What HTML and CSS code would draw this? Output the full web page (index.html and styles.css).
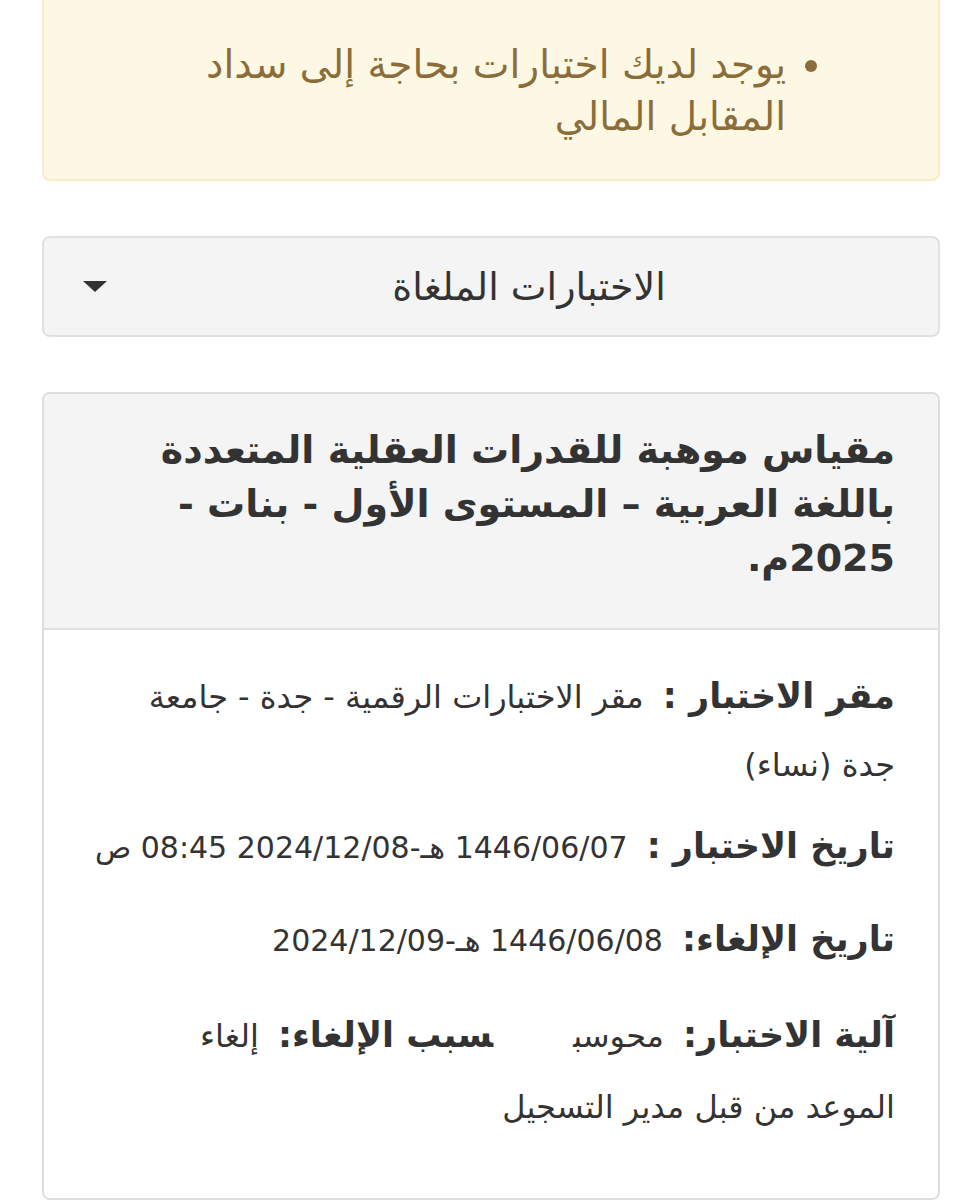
FILE: index.html
```html
<!DOCTYPE html>
<html lang="ar" dir="rtl">
<head>
<meta charset="utf-8">
<title>الاختبارات الملغاة</title>
<link rel="stylesheet" href="styles.css">
</head>
<body>
<div class="page">
  <div class="alert">
    <ul class="alert-list">
      <li>يوجد لديك اختبارات بحاجة إلى سداد المقابل المالي</li>
    </ul>
  </div>

  <div class="dropdown">
    <span class="dropdown-text">الاختبارات الملغاة</span>
    <svg class="caret" width="24" height="11" viewBox="0 0 24 11"><polygon points="0,0 24,0 12,11" fill="#333"/></svg>
  </div>

  <div class="card">
    <div class="card-header">
      <h3 class="card-title">مقياس موهبة للقدرات العقلية المتعددة باللغة العربية – المستوى الأول - بنات - 2025م.</h3>
    </div>
    <div class="card-body">
      <p class="row row-1"><span class="label">مقر الاختبار :</span> <span class="value">مقر الاختبارات الرقمية - جدة - جامعة<br>جدة (نساء)</span></p>
      <p class="row row-2"><span class="label">تاريخ الاختبار :</span> <span class="value date">1446/06/07 هـ-2024/12/08 08:45 ص</span></p>
      <p class="row row-3"><span class="label">تاريخ الإلغاء:</span> <span class="value date">1446/06/08 هـ-2024/12/09</span></p>
      <p class="row row-4"><span class="label">آلية الاختبار:</span> <span class="value-sm method">محوسب</span><span class="label">سبب الإلغاء:</span> <span class="value-sm">إلغاء</span><span class="value reason-rest">الموعد من قبل مدير التسجيل</span></p>
    </div>
  </div>
</div>
</body>
</html>
```

FILE: styles.css
```css
html, body {
  margin: 0;
  padding: 0;
  background: #ffffff;
}
body {
  font-family: "DejaVu Sans", "Noto Sans", sans-serif;
  color: #333333;
  overflow: hidden;
}
.page {
  padding: 0 40px 0 42px;
  display: flex;
  flex-direction: column;
}
.alert {
  margin-top: -30px;
  background: #fcf8e3;
  border: 2px solid #faebcc;
  border-radius: 8px;
  color: #8a6d3b;
  padding: 67px 0 36px 0;
}
.alert-list {
  margin: 0;
  padding: 0 152px 0 140px;
  font-size: 39px;
  line-height: 52px;
}
.alert-list li::marker {
  color: #8a6d3b;
}
.dropdown {
  margin-top: 55px;
  height: 97px;
  background: #f4f4f4;
  border: 2px solid #e0e0e0;
  border-radius: 8px;
  display: flex;
  align-items: center;
  padding-left: 39px;
}
.dropdown-text {
  flex: 1;
  text-align: center;
  font-size: 38px;
  color: #333;
  margin-left: 13px;
}
.caret {
  display: block;
  flex-shrink: 0;
  order: 2;
}
.card {
  margin-top: 55px;
  border: 2px solid #dddddd;
  border-radius: 8px;
  overflow: hidden;
}
.card-header {
  background: #f4f4f4;
  border-bottom: 2px solid #e0e0e0;
  padding: 29px 43px 43px 43px;
}
.card-title {
  margin: 0;
  font-size: 38px;
  font-weight: bold;
  line-height: 54px;
  color: #333;
}
.card-body {
  padding: 35px 43px 56px 30px;
  background: #fff;
}
.row {
  margin: 0;
  line-height: 63px;
}
.row-2 { margin-top: 13px; }
.row-3 { margin-top: 24px; }
.row-4 { margin-top: 27px; }
.label {
  font-size: 35px;
  font-weight: bold;
  color: #333;
  margin-left: 14px;
}
.value {
  font-size: 32px;
  color: #333;
}
.value.date {
  font-size: 30px;
  white-space: nowrap;
}
.value-sm {
  font-size: 32px;
  color: #333;
}
.method {
  margin-left: 80px;
}
.reason-rest {
  display: block;
  line-height: 69px;
}
```
